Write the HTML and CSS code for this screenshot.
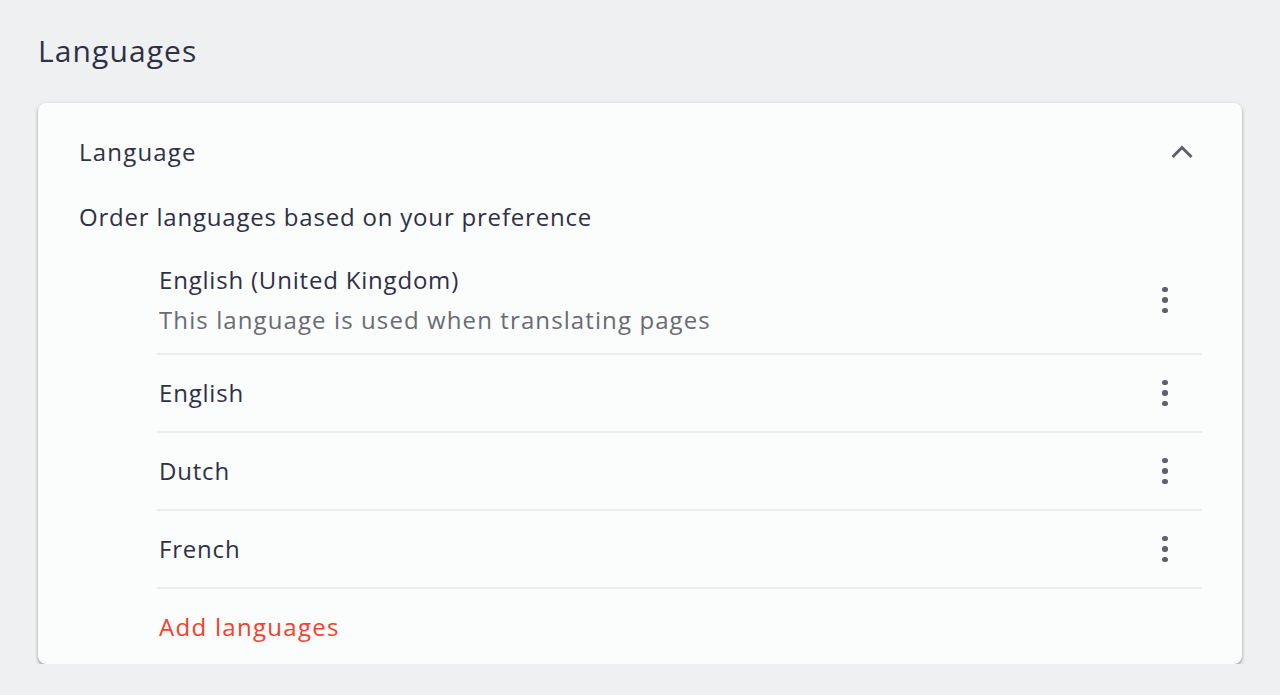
FILE: index.html
```html
<!DOCTYPE html>
<html lang="en">
<head>
<meta charset="utf-8">
<title>Languages</title>
<link rel="stylesheet" href="styles.css">
</head>
<body>
<main class="page">
  <h1 class="page-title">Languages</h1>
  <section class="card">
    <div class="card-header">
      <span class="card-title">Language</span>
      <button class="chevron" aria-label="Collapse">
        <svg width="24" height="24" viewBox="0 0 24 24"><path d="M2.5 17 L12 7.5 L21.5 17" fill="none" stroke="#5f6068" stroke-width="3"/></svg>
      </button>
    </div>
    <p class="desc">Order languages based on your preference</p>
    <ul class="lang-list">
      <li class="lang-item tall">
        <div class="lang-text">
          <span class="lang-name">English (United Kingdom)</span>
          <span class="lang-sub">This language is used when translating pages</span>
        </div>
        <span class="kebab"><i></i><i></i><i></i></span>
      </li>
      <li class="lang-item">
        <div class="lang-text"><span class="lang-name">English</span></div>
        <span class="kebab"><i></i><i></i><i></i></span>
      </li>
      <li class="lang-item">
        <div class="lang-text"><span class="lang-name">Dutch</span></div>
        <span class="kebab"><i></i><i></i><i></i></span>
      </li>
      <li class="lang-item">
        <div class="lang-text"><span class="lang-name">French</span></div>
        <span class="kebab"><i></i><i></i><i></i></span>
      </li>
      <li class="add-row"><a class="add-link" href="#">Add languages</a></li>
    </ul>
  </section>
</main>
</body>
</html>
```
FILE: styles.css
```css
* { box-sizing: border-box; }
html, body { margin: 0; padding: 0; }
body {
  background: #eff0f2;
  font-family: "Open Sans", "Lato", sans-serif;
  color: #2f3045;
  letter-spacing: 0.8px;
}
.page { padding: 0 38px; }
.page-title {
  margin: 0;
  height: 103px;
  padding-top: 29px;
  font-size: 30px;
  line-height: 44px;
  font-weight: 400;
  letter-spacing: 1.1px;
  color: #2f3045;
}
.card {
  width: 1204px;
  height: 561px;
  background: #fbfcfc;
  border-radius: 8px;
  box-shadow: 0 2px 3px rgba(0,0,0,0.32), 0 1px 6px rgba(0,0,0,0.08);
  padding: 0 40px 0 41px;
}
.card-header {
  height: 98px;
  display: flex;
  align-items: center;
  justify-content: space-between;
}
.card-title { font-size: 24px; line-height: 32px; letter-spacing: 1.2px; }
.chevron {
  width: 40px; height: 40px;
  margin-right: 0;
  border: 0; background: none; padding: 0;
  display: flex; align-items: center; justify-content: center;
}
.desc {
  margin: 0 0 14px;
  font-size: 24px;
  line-height: 32px;
}
.lang-list {
  list-style: none;
  margin: 0 0 0 78px;
  padding: 0;
}
.lang-item {
  display: flex;
  align-items: center;
  justify-content: space-between;
  height: 78px;
  border-bottom: 2px solid #ececec;
  padding-left: 2px;
}
.lang-item.tall { height: 108px; }
.lang-text { display: flex; flex-direction: column; }
.lang-name { font-size: 24px; line-height: 40px; color: #2f3045; }
.lang-sub { font-size: 24px; line-height: 40px; color: #6a6b73; letter-spacing: 1.1px; }
.kebab {
  width: 40px; height: 40px;
  margin-right: 17px;
  display: flex; flex-direction: column;
  align-items: center; justify-content: center;
  gap: 5px;
}
.kebab i {
  display: block;
  width: 5.5px; height: 5.5px;
  border-radius: 50%;
  background: #5f6068;
}
.add-row {
  height: 76px;
  display: flex;
  align-items: center;
  padding-left: 2px;
}
.add-link {
  font-size: 24px;
  line-height: 32px;
  letter-spacing: 1.3px;
  color: #f4402f;
  text-decoration: none;
}
```
